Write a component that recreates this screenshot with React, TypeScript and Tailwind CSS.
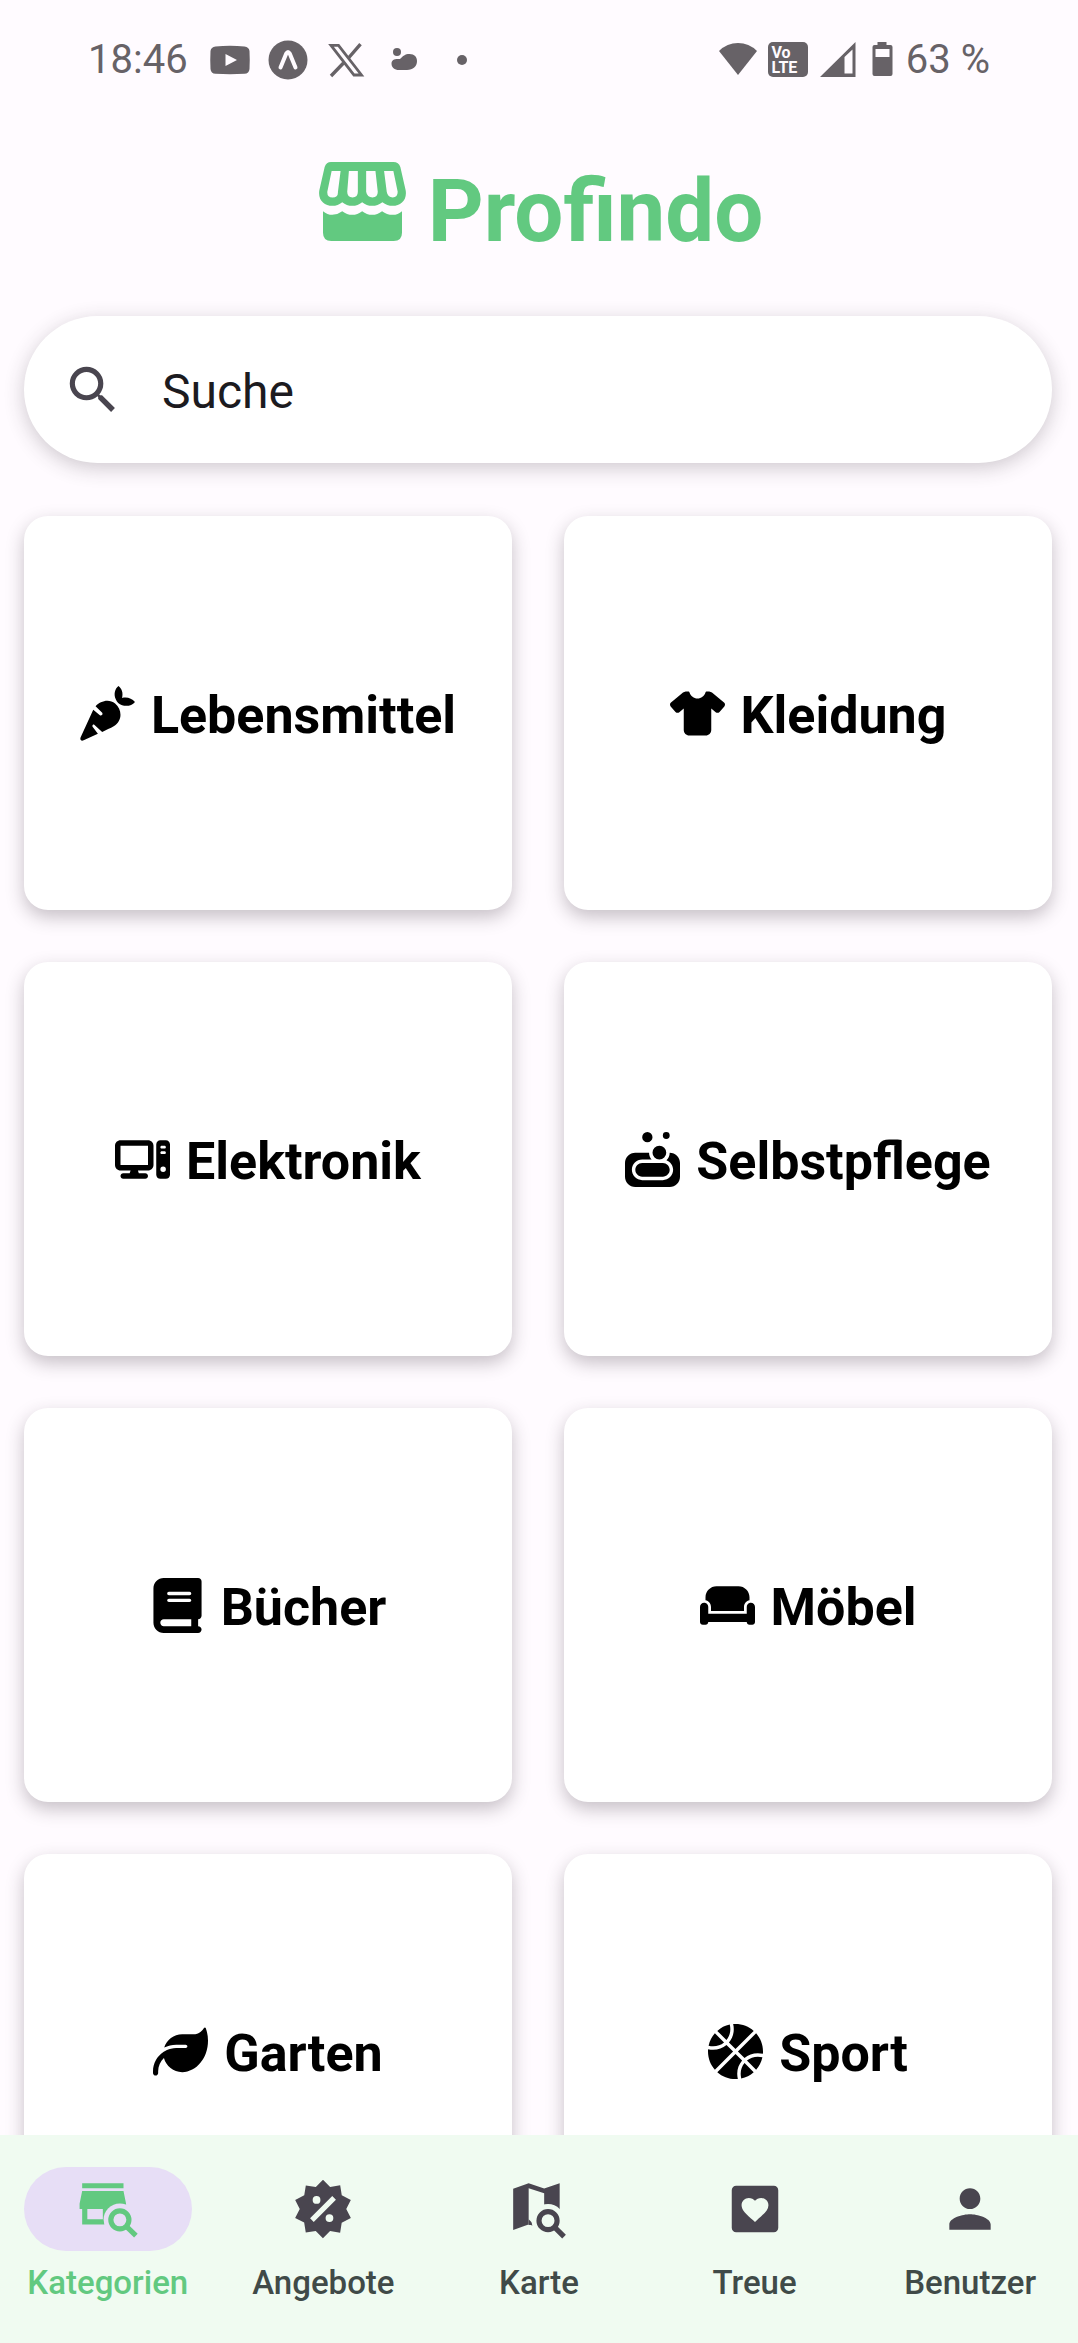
import React, { useState } from "react";
import {
    FaBasketball,
    FaBook,
    FaComputer,
    FaCouch,
    FaLeaf,
    FaShirt,
    FaSoap,
} from "react-icons/fa6";
import { MdPerson, MdSearch } from "react-icons/md";

function CarrotIcon({ className }: { className?: string }) {
    return (
        <svg viewBox="57 75 166 166" fill="currentColor" className={className}>
            <path d="M104 136C118 120 145 112 163 128C186 148 184 181 160 196C148 203 136 208 124 214L100 192C96 190 93 195 95 198L111 219L68 239C60 242 56 237 59 230L97 147L117 163C122 166 127 160 124 156Z" />
            <path d="M173 75C183 82 188 96 184 111C199 107 213 112 223 123C214 134 199 137 184 133C175 130 168 124 165 115C158 101 162 83 173 75Z" />
        </svg>
    );
}

const categories = [
    { name: "Lebensmittel", icon: CarrotIcon },
    { name: "Kleidung", icon: FaShirt },
    { name: "Elektronik", icon: FaComputer },
    { name: "Selbstpflege", icon: FaSoap },
    { name: "Bücher", icon: FaBook },
    { name: "Möbel", icon: FaCouch },
    { name: "Garten", icon: FaLeaf },
    { name: "Sport", icon: FaBasketball },
];

function StoreSearchIcon({ className }: { className?: string }) {
    return (
        <svg viewBox="0 0 24 24" fill="currentColor" className={className}>
            <mask id="store-cut">
                <rect width="24" height="24" fill="white" />
                <circle cx="16.6" cy="16.2" r="6.3" fill="black" />
            </mask>
            <g mask="url(#store-cut)">
                <path d="M2 2H18V4H2Z" />
                <path
                    fillRule="evenodd"
                    d="M2 5H18L19 10V12H12V18H2V12H1V10ZM4 12V16H10V12Z"
                />
            </g>
            <circle cx="16.6" cy="16.2" r="3.5" fill="none" stroke="currentColor" strokeWidth="2" />
            <path d="M19 18.6L22.8 22.3" stroke="currentColor" strokeWidth="2" />
        </svg>
    );
}

function SaleIcon({ className }: { className?: string }) {
    return (
        <svg viewBox="0 0 24 24" fill="currentColor" className={className}>
            <path d="M18.65,2.85L19.26,6.71L22.77,8.5L21,12L22.78,15.5L19.24,17.29L18.63,21.15L14.74,20.54L11.97,23.3L9.19,20.5L5.33,21.14L4.71,17.25L1.22,15.47L3,11.97L1.23,8.5L4.74,6.69L5.35,2.86L9.22,3.5L12,.69L14.77,3.46L18.65,2.85M9.5,7A1.5,1.5 0 0,0 8,8.5A1.5,1.5 0 0,0 9.5,10A1.5,1.5 0 0,0 11,8.5A1.5,1.5 0 0,0 9.5,7M14.5,14A1.5,1.5 0 0,0 13,15.5A1.5,1.5 0 0,0 14.5,17A1.5,1.5 0 0,0 16,15.5A1.5,1.5 0 0,0 14.5,14M8.41,17L17,8.41L15.59,7L7,15.59L8.41,17Z" />
        </svg>
    );
}

function MapSearchIcon({ className }: { className?: string }) {
    return (
        <svg viewBox="0 0 24 24" fill="currentColor" className={className}>
            <mask id="map-cut">
                <rect width="24" height="24" fill="white" />
                <circle cx="15.5" cy="16.5" r="6.4" fill="black" />
            </mask>
            <path
                mask="url(#map-cut)"
                fillRule="evenodd"
                d="M2 4.2L8 2L14 4.1L20 2V17L14 20L9 17.6L2 20.1ZM8 4V17.9L14 20V5.9Z"
            />
            <path mask="url(#map-cut)" d="M8 16L10 18L8 18.2Z" />
            <circle cx="15.5" cy="16.5" r="3.5" fill="none" stroke="currentColor" strokeWidth="2" />
            <path d="M18 19L21.7 22.7" stroke="currentColor" strokeWidth="2" />
        </svg>
    );
}

function HeartBoxIcon({ className }: { className?: string }) {
    return (
        <svg viewBox="0 0 24 24" fill="currentColor" fillRule="evenodd" className={className}>
            <path d="M4.7,3H19.3A1.7,1.7 0 0 1 21,4.7V19.3A1.7,1.7 0 0 1 19.3,21H4.7A1.7,1.7 0 0 1 3,19.3V4.7A1.7,1.7 0 0 1 4.7,3ZM12,17L12.72,16.34C15.3,14 17.2,12.46 17.2,10.5C17.2,8.9 15.9,7.7 14.4,7.7C13.4,7.7 12.55,8.1 12,8.8C11.45,8.1 10.6,7.7 9.6,7.7C8.1,7.7 6.8,8.9 6.8,10.5C6.8,12.46 8.7,14 11.28,16.34Z" />
        </svg>
    );
}

const tabs = [
    { name: "Kategorien", icon: StoreSearchIcon },
    { name: "Angebote", icon: SaleIcon },
    { name: "Karte", icon: MapSearchIcon },
    { name: "Treue", icon: HeartBoxIcon },
    { name: "Benutzer", icon: MdPerson },
];

function StatusBar() {
    return (
        <div className="flex h-[120px] shrink-0 items-center justify-between px-[88px] text-[40px] leading-none text-[#676267]">
            <div className="flex items-center gap-[18px]">
                <span className="mr-1">18:46</span>
                <svg viewBox="0 0 40 40" className="size-10" fill="currentColor">
                    <path
                        fillRule="evenodd"
                        d="M5.500 6.500Q20 5 34.500 6.500Q39 7 39.500 11Q40 20 39.500 29Q39 33.500 34.500 33.800Q20 34.500 5.500 33.800Q1 33.500 .5 29Q0 20 .5 11Q1 7 5.500 6.500ZM15.500 14V26L27 20Z"
                    />
                </svg>
                <svg viewBox="0 0 40 40" className="size-10">
                    <circle cx="20" cy="20" r="19.5" fill="currentColor" />
                    <path
                        d="M12.500 27.500L18.300 13.500Q20 10.500 21.700 13.500L27.500 27.500"
                        fill="none"
                        stroke="#fffbff"
                        strokeWidth="4"
                        strokeLinecap="round"
                    />
                </svg>
                <svg viewBox="0 0 40 40" className="size-10" fill="none" stroke="currentColor">
                    <path d="M5 5.300H12.500L35.500 35H28Z" strokeWidth="2.800" />
                    <path d="M34.500 4.200L22.500 18M17.500 23L5 36" strokeWidth="3.400" />
                </svg>
                <svg viewBox="0 0 40 40" className="size-10" fill="currentColor">
                    <circle cx="13" cy="12" r="4" />
                    <path d="M7.500 23.500C7.500 19.500 11 18.500 16 19C19 16 21 14 25.500 14C30.500 14 33 17 33 21C33 26.500 29 30 23 30H15C10.500 30 7.500 27.500 7.500 23.500Z" />
                </svg>
                <svg viewBox="0 0 40 40" className="size-10" fill="currentColor">
                    <circle cx="20" cy="20" r="5" />
                </svg>
            </div>
            <div className="flex items-center gap-[10px]">
                <svg viewBox="0 0 40 40" className="size-10" fill="currentColor">
                    <path d="M1 11Q9 3 20 3T39 11L20 35Z" />
                </svg>
                <svg viewBox="0 0 40 40" className="size-10">
                    <rect x="0" y="2" width="40" height="35" rx="5" fill="currentColor" />
                    <text x="3.500" y="17.500" fill="#fffbff" fontSize="16" fontWeight="700">
                        Vo
                    </text>
                    <text x="3.500" y="32.500" fill="#fffbff" fontSize="16" fontWeight="700">
                        LTE
                    </text>
                </svg>
                <svg viewBox="0 0 40 40" className="size-10" fill="currentColor">
                    <path fillRule="evenodd" d="M37.500 2V37H2ZM26.500 17V33.500H34.500V9.500Z" />
                </svg>
                <svg viewBox="6 0 28 40" className="h-10 w-7" fill="currentColor">
                    <path
                        fillRule="evenodd"
                        d="M15.500 2H24.500V5H28.500Q30.500 5 30.500 7V34Q30.500 36 28.500 36H12.500Q10.500 36 10.500 34V7Q10.500 5 12.500 5H15.500ZM13.500 9V17H27.500V9Z"
                    />
                </svg>
                <span>63 %</span>
            </div>
        </div>
    );
}

function Logo() {
    return (
        <svg viewBox="90 65 262 238" className="h-[79px] w-[87px]" fill="currentColor">
            <path
                fillRule="evenodd"
                d="M126 65H314Q330 65 335 80L351 150C356 180 336 197 312 197Q295 197 281 186Q267 197 250 197T220 186Q207 197 190 197T160 186Q147 197 130 197C106 197 86 180 91 150L107 80Q112 65 126 65ZM128 92L115 155Q114 172 131 172T147 155L155 92ZM180 92L175 155Q175 172 191 172T207 155V92ZM232 92V155Q235 172 251 172T267 155L260 92ZM286 92L294 155Q297 172 312 172T327 155L314 92Z"
            />
            <path d="M102 213Q115 224 130 224T160 213Q174 224 190 224T220 213Q234 224 250 224T280 213Q294 224 312 224Q328 224 340 213V278Q340 303 315 303H127Q102 303 102 278Z" />
        </svg>
    );
}

export default function App() {
    const [active, setActive] = useState("Kategorien");
    const [query, setQuery] = useState("");

    return (
        <div className="flex h-screen flex-col bg-[#fffbff] font-['Roboto',sans-serif]">
            <StatusBar />

            <header className="flex shrink-0 items-end justify-center gap-[22px] pt-[42px] pl-1 text-[#62c980]">
                <div className="pb-3">
                    <Logo />
                </div>
                <h1 className="text-[87px] leading-[84px] font-bold">Profindo</h1>
            </header>

            <main className="min-h-0 flex-1 overflow-y-auto pt-[63px] pr-[26px] pl-6 [scrollbar-width:none]">
                <label className="flex h-[147px] items-center gap-[38px] rounded-full bg-white pl-[38px] shadow-[0_5px_20px_rgba(50,40,50,0.24)]">
                    <MdSearch className="size-[62px] shrink-0 text-[#49454f]" />
                    <input
                        type="text"
                        aria-label="Suche"
                        placeholder="Suche"
                        value={query}
                        onChange={(e) => setQuery(e.target.value)}
                        className="w-full bg-transparent pt-1 text-[48px] text-[#1c1b1f] outline-none placeholder:text-[#1c1b1f]"
                    />
                </label>

                <div className="mt-[53px] grid grid-cols-2 gap-[52px] pb-[52px]">
                    {categories.map((c) => (
                        <button
                            key={c.name}
                            type="button"
                            className="flex h-[394px] items-center justify-center gap-4 rounded-3xl bg-white text-[52px] font-bold text-black shadow-[0_7px_18px_rgba(50,40,50,0.28)]"
                        >
                            <c.icon className="size-[55px] shrink-0" />
                            <span className="pt-1.5">{c.name}</span>
                        </button>
                    ))}
                </div>
            </main>

            <nav className="grid h-52 shrink-0 grid-cols-5 bg-[#f0fbf1] pt-8">
                {tabs.map((t) => (
                    <button
                        key={t.name}
                        type="button"
                        onClick={() => setActive(t.name)}
                        className={`flex flex-col items-center gap-3 text-[33px] leading-10 font-medium ${
                            active === t.name ? "text-[#62c980]" : "text-[#404a48]"
                        }`}
                    >
                        <span
                            className={`grid h-[84px] w-[168px] place-items-center rounded-full ${
                                active === t.name ? "bg-[#e7def6]" : "text-[#49454f]"
                            }`}
                        >
                            <t.icon className="size-[62px]" />
                        </span>
                        {t.name}
                    </button>
                ))}
            </nav>
        </div>
    );
}
